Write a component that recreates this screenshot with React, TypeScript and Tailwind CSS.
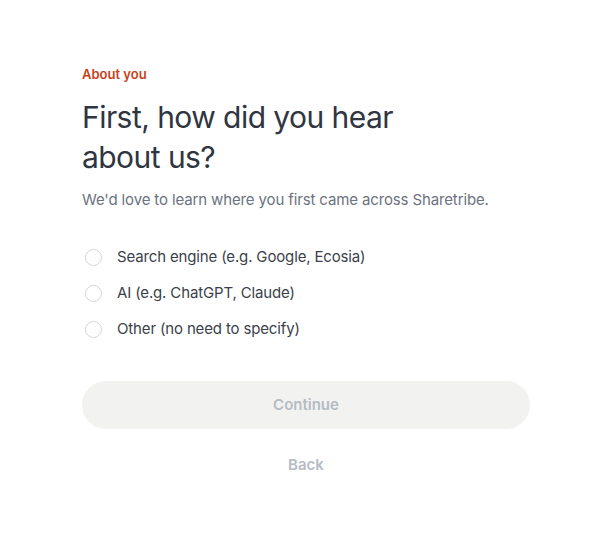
import { useState } from 'react'

const options = [
  'Search engine (e.g. Google, Ecosia)',
  'AI (e.g. ChatGPT, Claude)',
  'Other (no need to specify)',
]

export default function App() {
  const [choice, setChoice] = useState<number | null>(null)

  return (
    <div className="min-h-[538px] bg-white font-['Inter',sans-serif]">
      <div className="ml-[82px] w-[448px] pt-[64px]">
        <p className="text-[13px] font-semibold leading-5 text-[#c7421c]">About you</p>
        <h1 className="mt-[13px] text-[30px] leading-[40px] font-normal text-[#2f3541] tracking-[-0.55px]">
          First, how did you hear
          <br />
          about us?
        </h1>
        <p className="mt-[11px] text-[15px] leading-6 text-[#6b7280] tracking-[-0.13px]">
          We'd love to learn where you first came across Sharetribe.
        </p>

        {/* Options */}
        <div className="mt-[27px] flex flex-col">
          {options.map((o, i) => (
            <label key={o} className="flex h-9 items-center gap-[15px] cursor-pointer" onClick={() => setChoice(i)}>
              <span className="ml-[3px] flex h-[17px] w-[17px] items-center justify-center rounded-full border border-[#d6d6d6] bg-white">
                {choice === i && <span className="h-[9px] w-[9px] rounded-full bg-[#c7421c]" />}
              </span>
              <span className="text-[15px] text-[#3a3f4a] tracking-[-0.15px]">{o}</span>
            </label>
          ))}
        </div>

        <button
          type="button"
          disabled={choice === null}
          className="mt-[34px] flex h-12 w-full items-center justify-center rounded-full bg-[#f2f2f0] text-[15px] font-semibold text-[#b5bcc4]"
        >
          Continue
        </button>
        <button type="button" className="mx-auto mt-[25px] block text-[15px] font-semibold text-[#b5bcc4]">
          Back
        </button>
      </div>
    </div>
  )
}
